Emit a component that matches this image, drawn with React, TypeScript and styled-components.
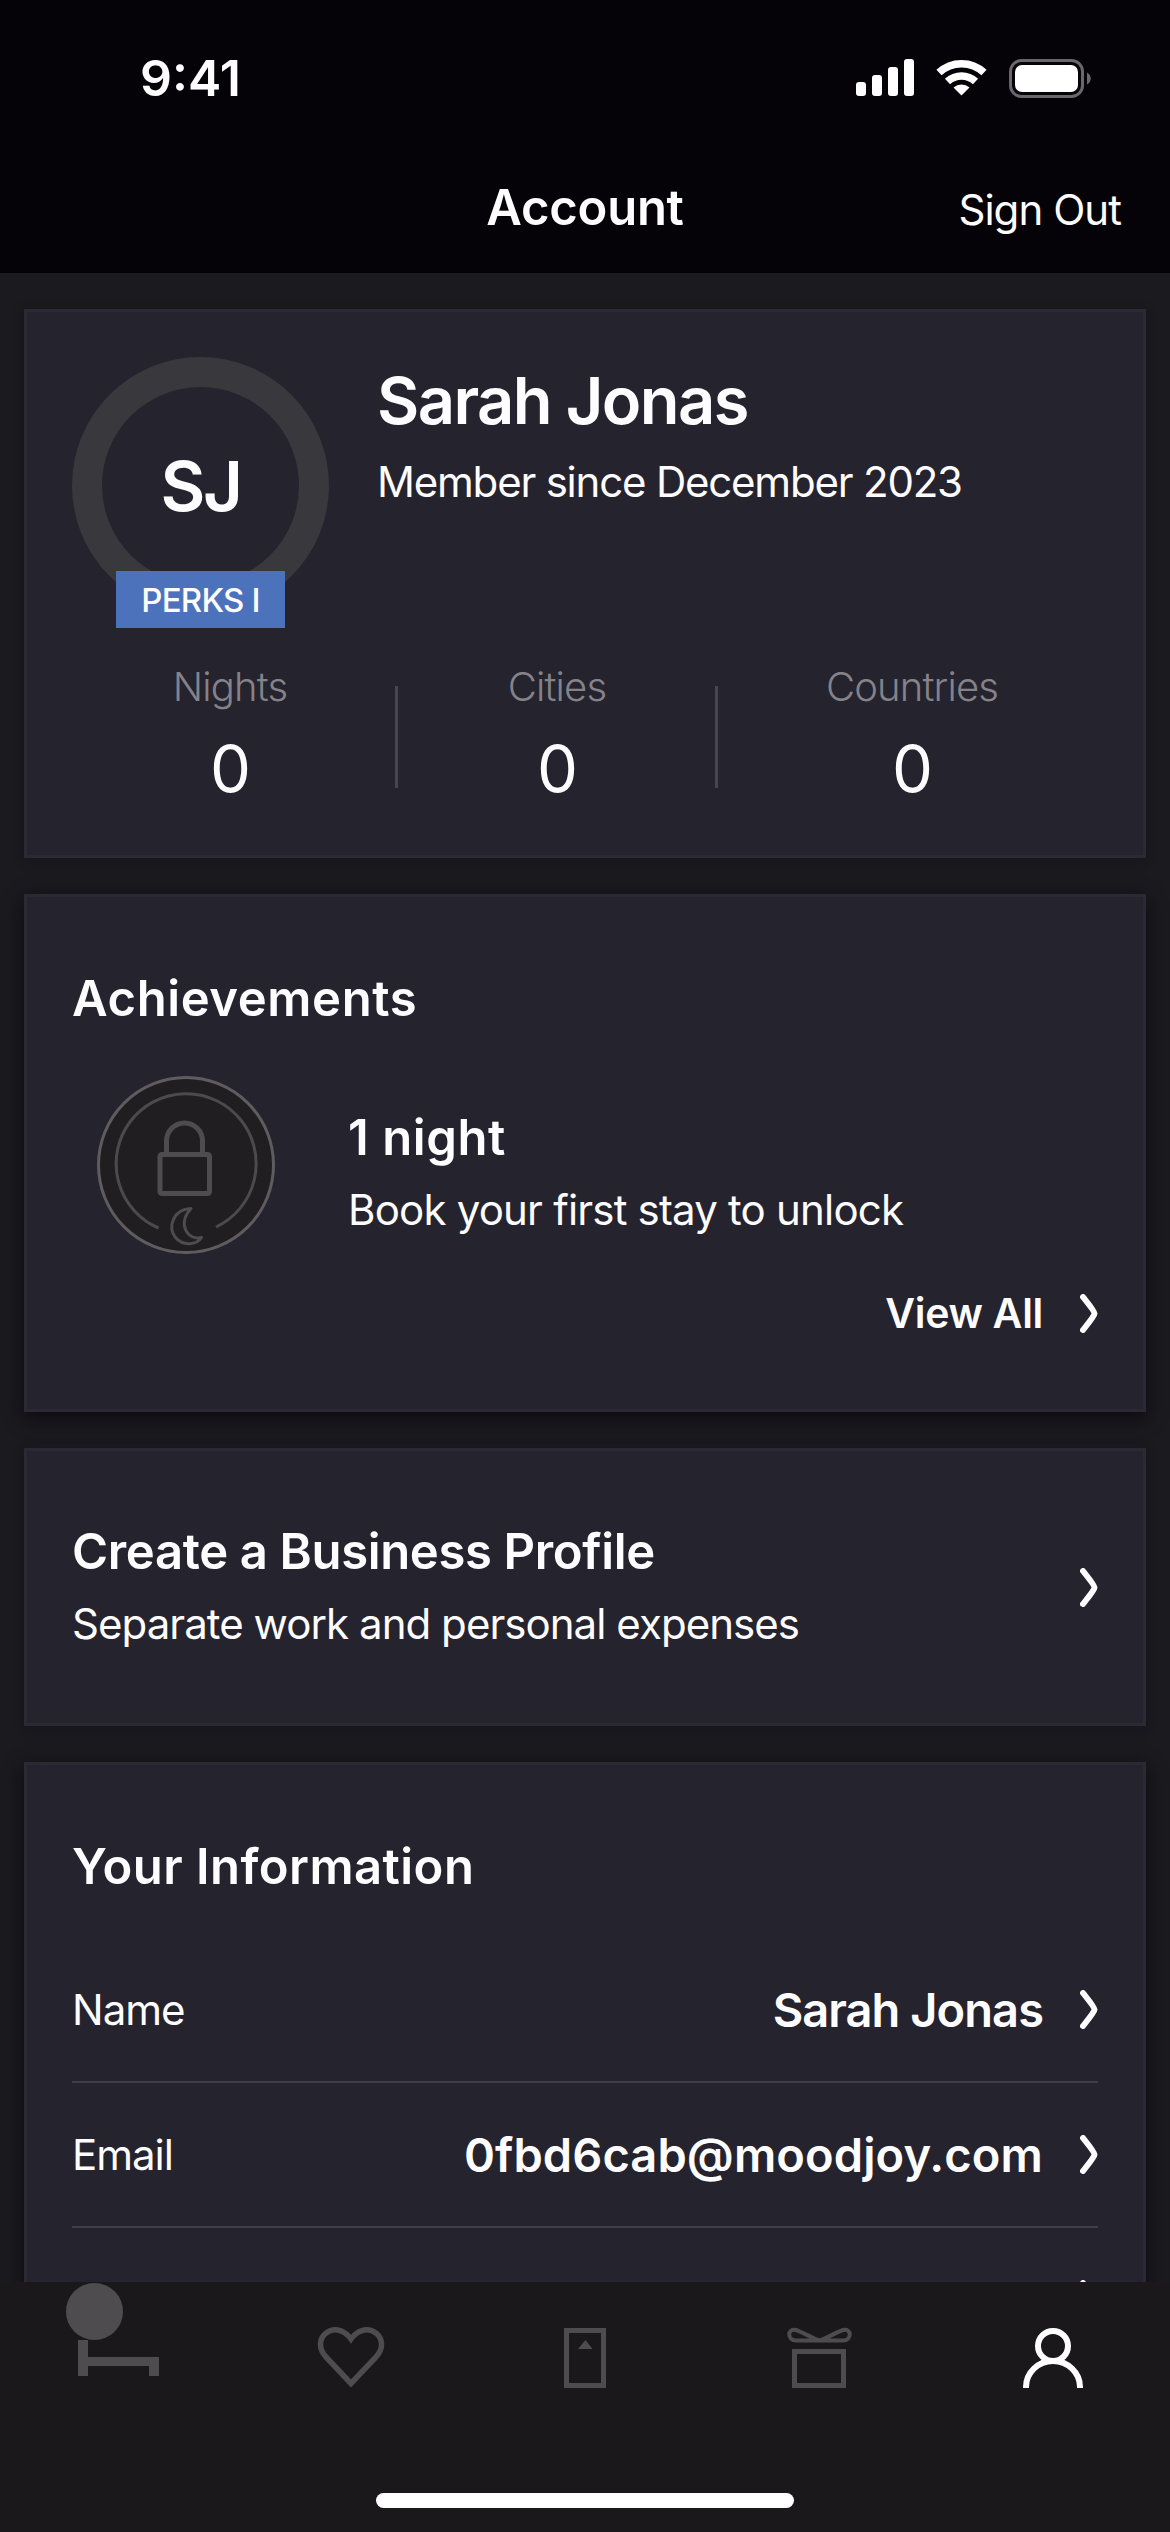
import React from "react";
import styled, { createGlobalStyle } from "styled-components";

const Global = createGlobalStyle`
  *, *::before, *::after { box-sizing: border-box; }
  html, body { margin: 0; padding: 0; background: #1b1a1e; }
`;

const Screen = styled.div`
  width: 1170px;
  height: 2532px;
  display: flex;
  flex-direction: column;
  overflow: hidden;
  background: #1b1a1e;
  color: #fdfcff;
  font-family: Inter, Lato, sans-serif;
`;

type TextProps = { $size: number; $weight?: number; $track?: number; $line?: number; $color?: string };
const Text = styled.span<TextProps>`
  display: block;
  white-space: nowrap;
  font-size: ${(p) => p.$size}px;
  font-weight: ${(p) => p.$weight ?? 400};
  letter-spacing: ${(p) => p.$track ?? 0}px;
  line-height: ${(p) => p.$line ?? 60}px;
  color: ${(p) => p.$color ?? "inherit"};
`;

const Header = styled.header`
  flex: 0 0 273px;
  background: #050307;
`;

const StatusBar = styled.div`
  height: 156px;
  padding: 0 79px 0 140px;
  display: flex;
  justify-content: space-between;
  align-items: center;
`;

const NavBar = styled.div`
  height: 104px;
  padding: 0 49px;
  display: grid;
  grid-template-columns: 1fr auto 1fr;
  align-items: center;
`;

const SignOut = styled(Text)`
  justify-self: end;
  padding-top: 4px;
`;

const Scroll = styled.main`
  flex: 0 0 2009px;
  padding: 36px 24px 0;
  display: flex;
  flex-direction: column;
  gap: 36px;
  overflow: hidden;
`;

const Card = styled.section<{ $height: number; $deep?: boolean }>`
  flex: 0 0 ${(p) => p.$height}px;
  border: 3px solid #2b2933;
  background: #25232d;
  box-shadow: ${(p) => (p.$deep ? "0 6px 18px rgba(8, 5, 14, 0.75)" : "0 2px 8px rgba(20, 18, 32, 0.7)")};
  padding: 0 45px;
`;

const ProfileTop = styled.div`
  display: flex;
  padding-top: 45px;
  height: 337px;
  gap: 48px;
`;

const Ring = styled.div`
  position: relative;
  width: 257px;
  height: 257px;
  border: 30px solid #39383d;
  border-radius: 50%;
  display: flex;
  align-items: center;
  justify-content: center;
`;

const PerksBadge = styled.div`
  position: absolute;
  left: 14px;
  top: 184px;
  width: 169px;
  height: 57px;
  padding-top: 2px;
  background: #4c72bc;
  display: flex;
  align-items: center;
  justify-content: center;
`;

const ProfileText = styled.div`
  display: flex;
  flex-direction: column;
  padding-top: 2px;
`;

const Stats = styled.div`
  display: grid;
  grid-template-columns: 334px 320px 390px;
  margin: 0 -9px;
`;

const Stat = styled.div`
  display: flex;
  flex-direction: column;
  align-items: center;
  position: relative;
  &:not(:last-child)::after {
    content: "";
    position: absolute;
    right: -1px;
    top: 37px;
    width: 3px;
    height: 102px;
    background: #47454d;
  }
`;

const SectionTitle = styled.h2`
  margin: 0;
  padding-top: 72px;
  font-weight: 400;
`;

const Achievement = styled.div`
  display: flex;
  align-items: center;
  gap: 72px;
  height: 180px;
  margin-top: 46px;
  padding-left: 24px;
`;

const Stack = styled.div<{ $top?: number }>`
  display: flex;
  flex-direction: column;
  gap: 12px;
  padding-top: ${(p) => p.$top ?? 2}px;
`;

const ViewAll = styled.div`
  display: flex;
  justify-content: flex-end;
  align-items: center;
  gap: 37px;
  height: 60px;
  margin-top: 28px;
`;

const BusinessRow = styled.div`
  display: flex;
  align-items: center;
  justify-content: space-between;
  height: 100%;
`;

const InfoList = styled.div`
  padding-top: 41px;
`;

const InfoRow = styled.div`
  display: flex;
  align-items: center;
  height: 145px;
  border-bottom: 2px solid #403e48;
`;

const InfoValue = styled.div`
  margin-left: auto;
  margin-right: 37px;
`;

const TabBar = styled.nav`
  flex: 0 0 250px;
  background: #1b181b;
  display: flex;
  flex-direction: column;
  align-items: center;
`;

const Tabs = styled.div`
  width: 100%;
  height: 211px;
  display: grid;
  grid-template-columns: repeat(5, 1fr);
  justify-items: center;
`;

const HomeIndicator = styled.div`
  width: 418px;
  height: 15px;
  border-radius: 8px;
  background: #fff;
`;

const Chevron = () => (
  <svg width="18" height="39" viewBox="0 0 18 39" fill="none">
    <path d="M3 3 C6.5 7.5 14.5 17 14.5 19.5 C14.5 22 6.5 31.5 3 36" stroke="#fdfcff" strokeWidth="6" strokeLinecap="round" />
  </svg>
);

const StatusIcons = () => (
  <svg width="236" height="40" viewBox="855 58 236 40">
    <g fill="#fff">
      <rect x="856" y="82" width="10" height="14" rx="3" />
      <rect x="872" y="75" width="10" height="21" rx="3" />
      <rect x="888" y="67" width="10" height="29" rx="3" />
      <rect x="904" y="59" width="10" height="37" rx="3" />
    </g>
    <g fill="none" stroke="#fff" strokeWidth="7.5">
      <path d="M939 72.500 A33 33 0 0 1 984 72.500" />
      <path d="M947.500 81.500 A20.500 20.500 0 0 1 975.500 81.500" />
    </g>
    <path d="M953.500 87.500 A12 12 0 0 1 969.500 87.500 L961.500 95.500 Z" fill="#fff" />
    <rect x="1010.500" y="60.500" width="72" height="36" rx="11" fill="none" stroke="#69676b" strokeWidth="3" />
    <rect x="1015" y="65" width="63" height="27" rx="7" fill="#fff" />
    <path d="M1087 72.500 C1092 75 1092 82 1087 84.500 Z" fill="#69676b" />
  </svg>
);

const LockedBadge = () => (
  <svg width="180" height="180" viewBox="96 1076 180 180" fill="none">
    <circle cx="186" cy="1166" r="87.500" fill="#211e21" stroke="#5f5c60" strokeWidth="3" />
    <path d="M158.500 1229 A70 70 0 1 1 216 1228" stroke="#4d4a4e" strokeWidth="3" />
    <rect x="160" y="1155.500" width="49.500" height="39" rx="2" stroke="#4f4c50" strokeWidth="5" />
    <path d="M166.500 1153 V1142 A18 18 0 0 1 202.500 1142 V1153" stroke="#4f4c50" strokeWidth="5" />
    <path d="M191 1209.500 C173 1210 167 1229 175.500 1238.500 C183 1247.500 197 1246 201.500 1238.500 C187 1242 177 1224 191 1209.500 Z" stroke="#4f4c50" strokeWidth="3" strokeLinejoin="round" />
  </svg>
);

const tabIcons = [
  <g key="bed" fill="#4f4c50">
    <circle cx="94.500" cy="29.500" r="28.500" />
    <path d="M78 58 H88 V75 H159 V94 H149 V84 H88 V94 H78 Z" />
  </g>,
  <path key="heart" d="M117 101.500 L92.500 75.500 C74.500 57 101 35 117 57 C133 35 159.500 57 141.500 75.500 Z" fill="none" stroke="#4f4c50" strokeWidth="5.500" />,
  <g key="door">
    <rect x="98.500" y="48.500" width="37" height="55" fill="none" stroke="#4f4c50" strokeWidth="5" />
    <path d="M117.500 58 L124.500 67 H110 Z" fill="#4f4c50" />
  </g>,
  <g key="gift" fill="none" stroke="#4f4c50">
    <rect x="92.500" y="69.500" width="49" height="34" strokeWidth="5" />
    <path d="M117.500 58.500 H94 C85 58.500 85 46 94 48 C98 49 110 56 117.500 58.500 C125 56 137 49 141 48 C150 46 150 58.500 141 58.500 Z" strokeWidth="4" />
  </g>,
  <g key="person" fill="none" stroke="#fff" strokeWidth="6">
    <circle cx="117" cy="64" r="15" />
    <path d="M90 106 V105 A27 26 0 0 1 144 105 V106" />
  </g>,
];

const stats = [
  { label: "Nights", value: "0" },
  { label: "Cities", value: "0" },
  { label: "Countries", value: "0" },
];

const info = [
  { label: "Name", value: "Sarah Jonas", track: -0.95 },
  { label: "Email", value: "0fbd6cab@moodjoy.com", track: 0.1 },
  { label: "", value: "", track: 0 },
];

export default function App() {
  return (
    <>
      <Global />
      <Screen>
        <Header>
          <StatusBar>
            <Text $size={50} $weight={600}>9:41</Text>
            <StatusIcons />
          </StatusBar>
          <NavBar>
            <span />
            <Text $size={49} $weight={600} $track={-0.25}>Account</Text>
            <SignOut $size={42} $track={-0.95}>Sign Out</SignOut>
          </NavBar>
        </Header>
        <Scroll>
          <Card $height={549}>
            <ProfileTop>
              <Ring>
                <Text $size={69} $weight={600} $line={80} $track={-2.5}>SJ</Text>
                <PerksBadge>
                  <Text $size={33} $weight={500} $line={55} $track={-0.8}>PERKS I</Text>
                </PerksBadge>
              </Ring>
              <ProfileText>
                <Text $size={65} $weight={600} $line={84} $track={-1.6}>Sarah Jonas</Text>
                <Text $size={42} $line={77} $track={-1.2}>Member since December 2023</Text>
              </ProfileText>
            </ProfileTop>
            <Stats>
              {stats.map((s) => (
                <Stat key={s.label}>
                  <Text $size={40} $line={76} $weight={300} $color="#85838a" $track={-0.85}>{s.label}</Text>
                  <Text $size={65} $line={88} $track={-1}>{s.value}</Text>
                </Stat>
              ))}
            </Stats>
          </Card>
          <Card $height={518} $deep>
            <SectionTitle><Text $size={49} $weight={600} $track={0.6}>Achievements</Text></SectionTitle>
            <Achievement>
              <LockedBadge />
              <Stack $top={17}>
                <Text $size={49} $weight={600} $track={0.6}>1 night</Text>
                <Text $size={42} $track={-0.8}>Book your first stay to unlock</Text>
              </Stack>
            </Achievement>
            <ViewAll>
              <Text $size={41} $weight={600} $track={-0.3}>View All</Text>
              <Chevron />
            </ViewAll>
          </Card>
          <Card $height={278}>
            <BusinessRow>
              <Stack>
                <Text $size={49} $weight={600} $track={-0.35}>Create a Business Profile</Text>
                <Text $size={42} $track={-0.95}>Separate work and personal expenses</Text>
              </Stack>
              <Chevron />
            </BusinessRow>
          </Card>
          <Card $height={760} $deep>
            <SectionTitle><Text $size={49} $weight={600} $track={0.45}>Your Information</Text></SectionTitle>
            <InfoList>
              {info.map((row) => (
                <InfoRow key={row.label}>
                  <Text $size={42} $track={-1}>{row.label}</Text>
                  <InfoValue><Text $size={47} $weight={600} $track={row.track}>{row.value}</Text></InfoValue>
                  <Chevron />
                </InfoRow>
              ))}
            </InfoList>
          </Card>
        </Scroll>
        <TabBar>
          <Tabs>
            {tabIcons.map((icon, i) => (
              <svg key={i} width="234" height="130" viewBox="0 0 234 130">{icon}</svg>
            ))}
          </Tabs>
          <HomeIndicator />
        </TabBar>
      </Screen>
    </>
  );
}
